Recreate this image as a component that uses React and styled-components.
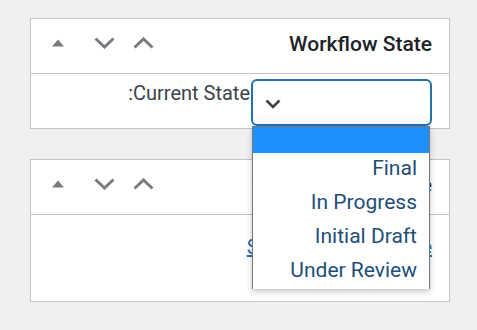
import React from "react";
import styled, { createGlobalStyle } from "styled-components";

const GlobalStyle = createGlobalStyle`
  body {
    margin: 0;
    background: #f0f0f1;
    font-family: Roboto, "Noto Sans", sans-serif;
  }
`;

const Page = styled.div`
  width: 420px;
  padding: 18px 0 0 30px;
  display: flex;
  flex-direction: column;
  gap: 30px;
`;

const Postbox = styled.div`
  background: #fff;
  border: 1px solid #c3c4c7;
  position: relative;
`;

const Header = styled.div`
  height: 54px;
  border-bottom: 1px solid #c3c4c7;
  display: flex;
  align-items: center;
  direction: rtl;
  padding-right: 17px;
`;

const Title = styled.h2`
  flex: 1;
  margin: 0 0 2px;
  font-size: 21px;
  font-weight: 500;
  line-height: 1.4;
  color: #1d2327;
`;

const Actions = styled.div`
  display: flex;
  height: 100%;
`;

const HandleButton = styled.button`
  width: ${(p) => (p.$wide ? "54px" : "39px")};
  height: 54px;
  padding: 0 0 6px;
  border: 0;
  background: none;
  display: flex;
  align-items: center;
  justify-content: center;
  color: #787c82;
`;

const Body = styled.div`
  height: ${(p) => p.$h}px;
  box-sizing: border-box;
  padding: ${(p) => p.$top}px 17px 0;
  display: flex;
  justify-content: flex-end;
  align-items: flex-start;
`;

const Label = styled.label`
  font-size: 20px;
  line-height: 28px;
  color: #3c434a;
  margin-right: 1px;
`;

const Select = styled.div`
  position: relative;
  width: 181px;
  height: 47px;
  box-sizing: border-box;
  border: 2px solid #2271b1;
  border-radius: 6px;
  background: linear-gradient(#fff 70%, #f6f7f7);
  display: flex;
  align-items: center;
  padding: 3px 0 0 12px;
  color: #3c434a;
`;

const Dropdown = styled.ul`
  position: absolute;
  top: 45px;
  left: -1px;
  width: 178px;
  box-sizing: border-box;
  margin: 0;
  padding: 0;
  list-style: none;
  background: #fff;
  border: 1px solid #767676;
  border-bottom: 0;
  box-shadow: 0 3px 6px rgba(0, 0, 0, 0.22);
  z-index: 5;
`;

const Option = styled.li`
  height: ${(p) => (p.$blank ? "26px" : "34px")};
  line-height: 31px;
  padding-right: 12px;
  text-align: right;
  font-size: 21px;
  color: #1e4e79;
  background: ${(p) => (p.$active ? "#1e90ff" : "#fff")};
`;

const Link = styled.a`
  font-size: 20px;
  line-height: 28px;
  color: #2271b1;
  text-decoration: underline;
`;

const Triangle = () => (
  <svg width="12" height="8" viewBox="0 0 12 8">
    <polygon points="0,7.5 6,0.5 12,7.5" fill="currentColor" />
  </svg>
);

const Chevron = ({ up }) => (
  <svg width="21" height="12" viewBox="0 0 21 12">
    <polyline
      points={up ? "1.5,10.5 10.5,2 19.5,10.5" : "1.5,1.5 10.5,10 19.5,1.5"}
      fill="none"
      stroke="currentColor"
      strokeWidth="3"
    />
  </svg>
);

function PanelHeader({ title }) {
  return (
    <Header>
      <Title>{title}</Title>
      <Actions>
        <HandleButton aria-label="Move up">
          <Chevron up />
        </HandleButton>
        <HandleButton aria-label="Move down">
          <Chevron />
        </HandleButton>
        <HandleButton $wide aria-label="Toggle panel">
          <Triangle />
        </HandleButton>
      </Actions>
    </Header>
  );
}

const states = ["Final", "In Progress", "Initial Draft", "Under Review"];

export default function App() {
  return (
    <>
      <GlobalStyle />
      <Page>
        <Postbox>
          <PanelHeader title="Workflow State" />
          <Body $h={54} $top={5}>
            <Label dir="rtl">Current State:</Label>
            <Select>
              <svg width="16" height="10" viewBox="0 0 16 10">
                <polyline points="1.5,1.5 8,8 14.5,1.5" fill="none" stroke="currentColor" strokeWidth="2.6" />
              </svg>
              <Dropdown>
                <Option $blank $active />
                {states.map((s) => (
                  <Option key={s}>{s}</Option>
                ))}
              </Dropdown>
            </Select>
          </Body>
        </Postbox>
        <Postbox>
          <PanelHeader title="Workflow Schedule" />
          <Body $h={86} $top={18}>
            <Link href="#">Show workflow state</Link>
          </Body>
        </Postbox>
      </Page>
    </>
  );
}
